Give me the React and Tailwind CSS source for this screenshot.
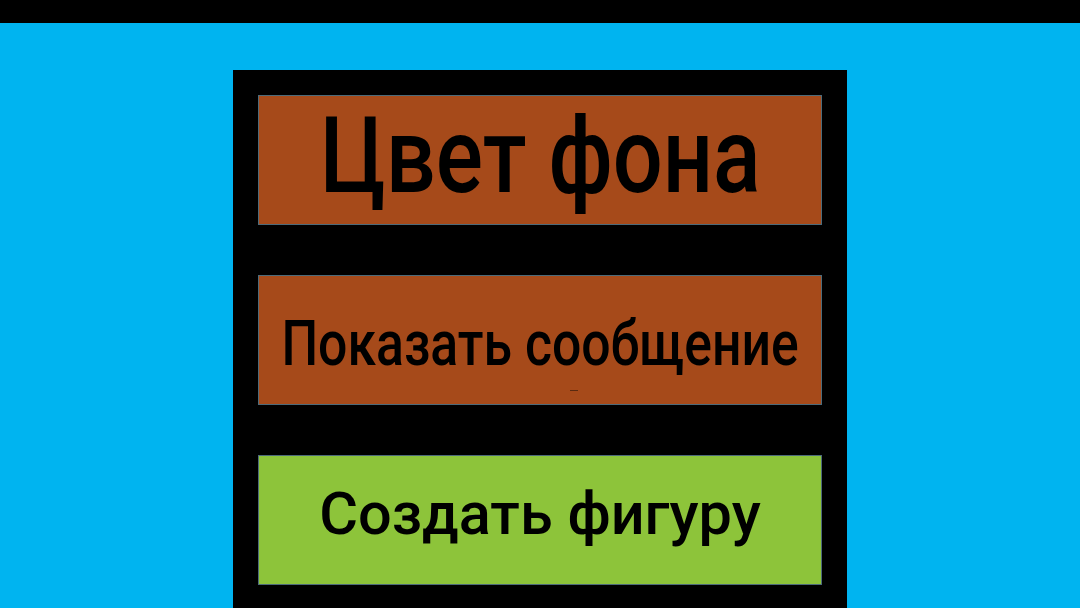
export default function App() {
    const buttons = [
        { label: 'Цвет фона', bg: 'bg-[#a64a1a]', text: 'text-[105px] pb-[8px]', scale: 'scale-x-[0.84]' },
        { label: 'Показать сообщение', bg: 'bg-[#a64a1a]', text: 'text-[63px] pt-[7px]', scale: 'scale-x-[0.821]', mark: true },
        { label: 'Создать фигуру', bg: 'bg-[#8dc43a]', text: 'text-[60px] pb-[12px]', scale: 'scale-x-[0.99]' },
    ];

    return (
        <div className="w-[1080px] h-[608px] overflow-hidden bg-[#00b4f0] flex flex-col" style={{ fontFamily: 'Roboto, "Noto Sans", sans-serif' }}>
            <div className="h-[23px] bg-black shrink-0" />
            <div className="flex-1 pt-[47px] pl-[233px]">
                <div className="w-[614px] h-full bg-black px-[25px] pt-[25px] flex flex-col gap-[50px]">
                    {buttons.map((b) => (
                        <button
                            key={b.label}
                            className={`relative h-[130px] w-full border border-[#4d6b7a] ${b.bg} flex items-center justify-center text-black font-medium leading-none whitespace-nowrap ${b.text}`}
                        >
                            <span className={`inline-block ${b.scale}`}>{b.label}</span>
                            {b.mark && <span className="absolute left-[311px] top-[114px] w-[8px] h-px bg-[#5a2a10]" />}
                        </button>
                    ))}
                </div>
            </div>
        </div>
    );
}
